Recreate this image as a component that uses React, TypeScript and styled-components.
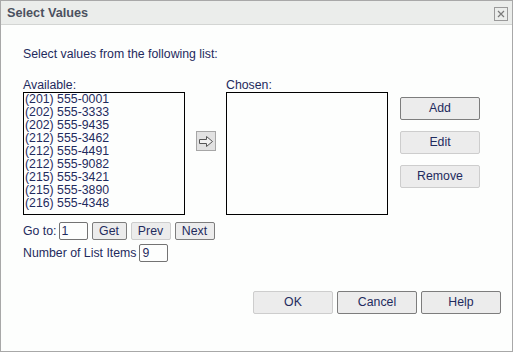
import React, { useState } from 'react'
import styled, { createGlobalStyle } from 'styled-components'

const GlobalStyle = createGlobalStyle`
  html, body {
    margin: 0;
    padding: 0;
    background: #ffffff;
  }
  body {
    font-family: 'Liberation Sans', Arial, sans-serif;
    font-size: 12.3px;
    color: #1f2b5e;
  }
`

const Dialog = styled.div`
  box-sizing: border-box;
  width: 513px;
  height: 352px;
  border: 1px solid #a8a8a8;
  background: #fdfefd;
  display: flex;
  flex-direction: column;
`

const TitleBar = styled.div`
  box-sizing: border-box;
  height: 24px;
  flex-shrink: 0;
  background: #ebedeb;
  border-bottom: 1px solid #d3d5d3;
  display: flex;
  align-items: center;
  justify-content: space-between;
  padding: 0 4px 0 6px;
`

const Title = styled.div`
  font-weight: bold;
  font-size: 12.7px;
  color: #4b5160;
`

const CloseBox = styled.button`
  width: 14px;
  height: 14px;
  padding: 0;
  border: none;
  background: transparent;
  display: flex;
  margin-top: 2px;
`

const Body = styled.div`
  flex: 1;
  display: flex;
  flex-direction: column;
  padding: 22px 11px 0 22px;
`

const Intro = styled.div`
  line-height: 14px;
`

const Columns = styled.div`
  display: flex;
  align-items: flex-start;
  margin-top: 18px;
`

const ListColumn = styled.div`
  display: flex;
  flex-direction: column;
  margin-left: ${(p: { $offset?: number }) => p.$offset ?? 0}px;
`

const Label = styled.div`
  line-height: 13px;
`

const ListBox = styled.div`
  box-sizing: border-box;
  width: 162px;
  height: 123px;
  border: 1px solid #000;
  background: #fdfefd;
  padding: 0 1px;
  overflow: hidden;
`

const ListItem = styled.div`
  line-height: 13px;
  white-space: nowrap;
  color: #1f2b5e;
`

const ArrowButton = styled.button`
  box-sizing: border-box;
  width: 20px;
  height: 20px;
  margin: 52px 0 0 11px;
  padding: 0;
  border: 1px solid #a6a6a6;
  background: #e2e2e2;
  display: flex;
  align-items: center;
  justify-content: center;
`

const SideButtons = styled.div`
  display: flex;
  flex-direction: column;
  gap: 11px;
  margin: 18px 0 0 12px;
`

const Button = styled.button<{ $w?: number; $h?: number; $strong?: boolean }>`
  box-sizing: border-box;
  width: ${(p) => p.$w ?? 80}px;
  height: ${(p) => p.$h ?? 23}px;
  padding: 0;
  border: 1px solid ${(p) => (p.$strong ? '#7d7d7d' : '#cdcdcd')};
  border-radius: 2px;
  background: #ececec;
  font-family: 'Liberation Sans', Arial, sans-serif;
  font-size: 12.3px;
  color: #1f2b5e;
  line-height: 1;
`

const Row = styled.div<{ $top: number }>`
  display: flex;
  align-items: center;
  height: 18px;
  margin-top: ${(p) => p.$top}px;
`

const SmallInput = styled.input<{ $gap: number }>`
  box-sizing: border-box;
  width: 29px;
  height: 18px;
  margin: 0 4px 0 ${(p) => p.$gap}px;
  padding: 0 2px;
  border: 1px solid #737373;
  border-radius: 2px;
  background: #fdfefd;
  font-family: 'Liberation Sans', Arial, sans-serif;
  font-size: 12.3px;
  color: #1f2b5e;
  outline: none;
`

const PagerButtons = styled.div`
  display: flex;
  gap: 4px;
`

const Footer = styled.div`
  display: flex;
  justify-content: flex-end;
  gap: 4px;
  margin-top: 29px;
`

const numbers = [
  '(201) 555-0001',
  '(202) 555-3333',
  '(202) 555-9435',
  '(212) 555-3462',
  '(212) 555-4491',
  '(212) 555-9082',
  '(215) 555-3421',
  '(215) 555-3890',
  '(216) 555-4348',
]

const CloseIcon = () => (
  <svg width="14" height="14" viewBox="0 0 14 14">
    <rect x="0.5" y="0.5" width="13" height="13" fill="none" stroke="#9a9a9a" />
    <path d="M4 4 L10 10 M10 4 L4 10" stroke="#7a7a7a" strokeWidth="1.2" />
  </svg>
)

const ArrowIcon = () => (
  <svg width="16" height="13" viewBox="0 0 16 13">
    <polygon
      points="1.5,4.5 8.5,4.5 8.5,1.5 14.5,6.5 8.5,11.5 8.5,8.5 1.5,8.5"
      fill="#f2f2f2"
      stroke="#555"
      strokeWidth="1"
    />
  </svg>
)

const App: React.FC = () => {
  const [goTo, setGoTo] = useState('1')
  const [count, setCount] = useState('9')

  return (
    <>
      <GlobalStyle />
      <Dialog>
        <TitleBar>
          <Title>Select Values</Title>
          <CloseBox>
            <CloseIcon />
          </CloseBox>
        </TitleBar>
        <Body>
          <Intro>Select values from the following list:</Intro>
          <Columns>
            <ListColumn>
              <Label>Available:</Label>
              <ListBox>
                {numbers.map((n) => (
                  <ListItem key={n}>{n}</ListItem>
                ))}
              </ListBox>
            </ListColumn>
            <ArrowButton>
              <ArrowIcon />
            </ArrowButton>
            <ListColumn $offset={10}>
              <Label>Chosen:</Label>
              <ListBox />
            </ListColumn>
            <SideButtons>
              <Button $strong>Add</Button>
              <Button>Edit</Button>
              <Button>Remove</Button>
            </SideButtons>
          </Columns>
          <Row $top={7}>
            <span>Go to:</span>
            <SmallInput $gap={2} value={goTo} onChange={(e) => setGoTo(e.target.value)} />
            <PagerButtons>
              <Button $w={35} $h={18} $strong>
                Get
              </Button>
              <Button $w={40} $h={18}>
                Prev
              </Button>
              <Button $w={40} $h={18} $strong>
                Next
              </Button>
            </PagerButtons>
          </Row>
          <Row $top={4}>
            <span>Number of List Items</span>
            <SmallInput $gap={3} value={count} onChange={(e) => setCount(e.target.value)} />
          </Row>
          <Footer>
            <Button $w={80}>OK</Button>
            <Button $w={80} $strong>
              Cancel
            </Button>
            <Button $w={80} $strong>
              Help
            </Button>
          </Footer>
        </Body>
      </Dialog>
    </>
  )
}

export default App
